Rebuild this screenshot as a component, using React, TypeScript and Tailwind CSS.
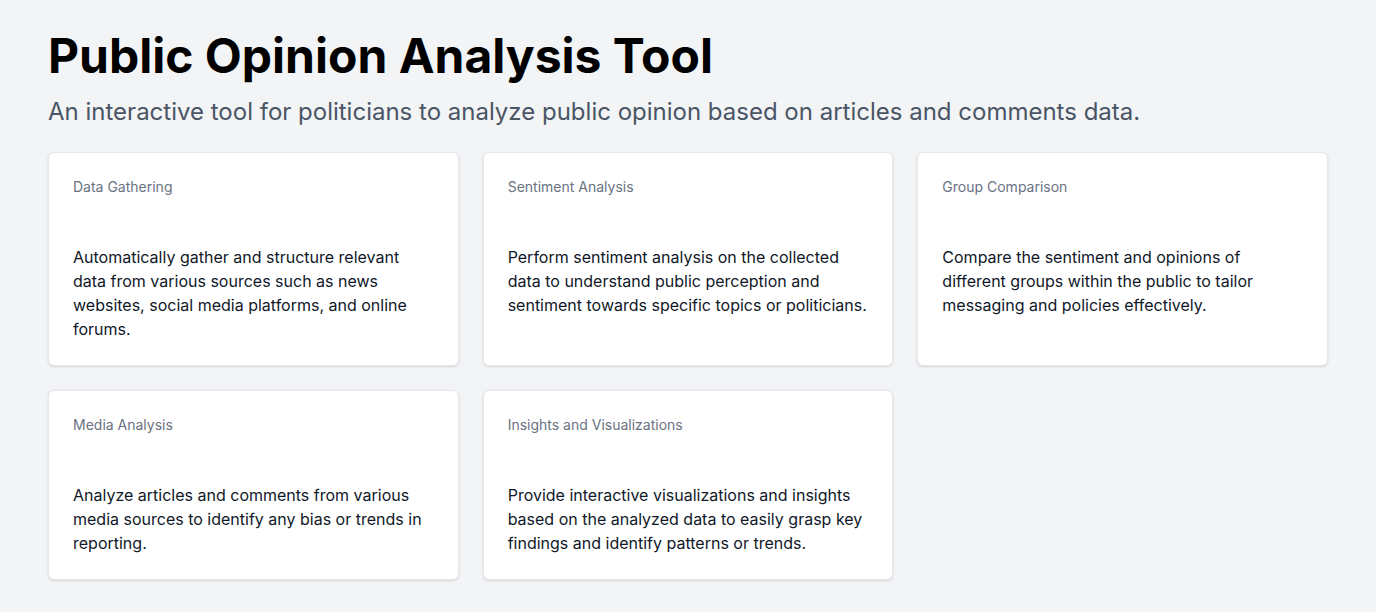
const features = [
  {
    title: 'Data Gathering',
    body: 'Automatically gather and structure relevant data from various sources such as news websites, social media platforms, and online forums.',
  },
  {
    title: 'Sentiment Analysis',
    body: 'Perform sentiment analysis on the collected data to understand public perception and sentiment towards specific topics or politicians.',
  },
  {
    title: 'Group Comparison',
    body: 'Compare the sentiment and opinions of different groups within the public to tailor messaging and policies effectively.',
  },
  {
    title: 'Media Analysis',
    body: 'Analyze articles and comments from various media sources to identify any bias or trends in reporting.',
  },
  {
    title: 'Insights and Visualizations',
    body: 'Provide interactive visualizations and insights based on the analyzed data to easily grasp key findings and identify patterns or trends.',
  },
];

const App = () => {
  return (
    <div className="min-h-screen bg-gray-100 font-['Inter',sans-serif]">
      <div className="px-12 pt-8 pb-8 w-[1376px]">
        <h1 className="text-5xl leading-none font-bold text-black">
          Public Opinion Analysis Tool
        </h1>
        <p className="mt-4 text-2xl text-gray-600">
          An interactive tool for politicians to analyze public opinion based on articles and comments data.
        </p>

        {/* Feature cards */}
        <div className="grid grid-cols-3 gap-6 mt-6 w-[1280px]">
          {features.map(f => (
            <div key={f.title} className="rounded-md border border-gray-200 bg-white shadow-sm p-6">
              <p className="text-sm leading-5 text-gray-500">{f.title}</p>
              <p className="mt-12 text-base leading-6 text-gray-900">{f.body}</p>
            </div>
          ))}
        </div>
      </div>
    </div>
  );
};

export default App;
